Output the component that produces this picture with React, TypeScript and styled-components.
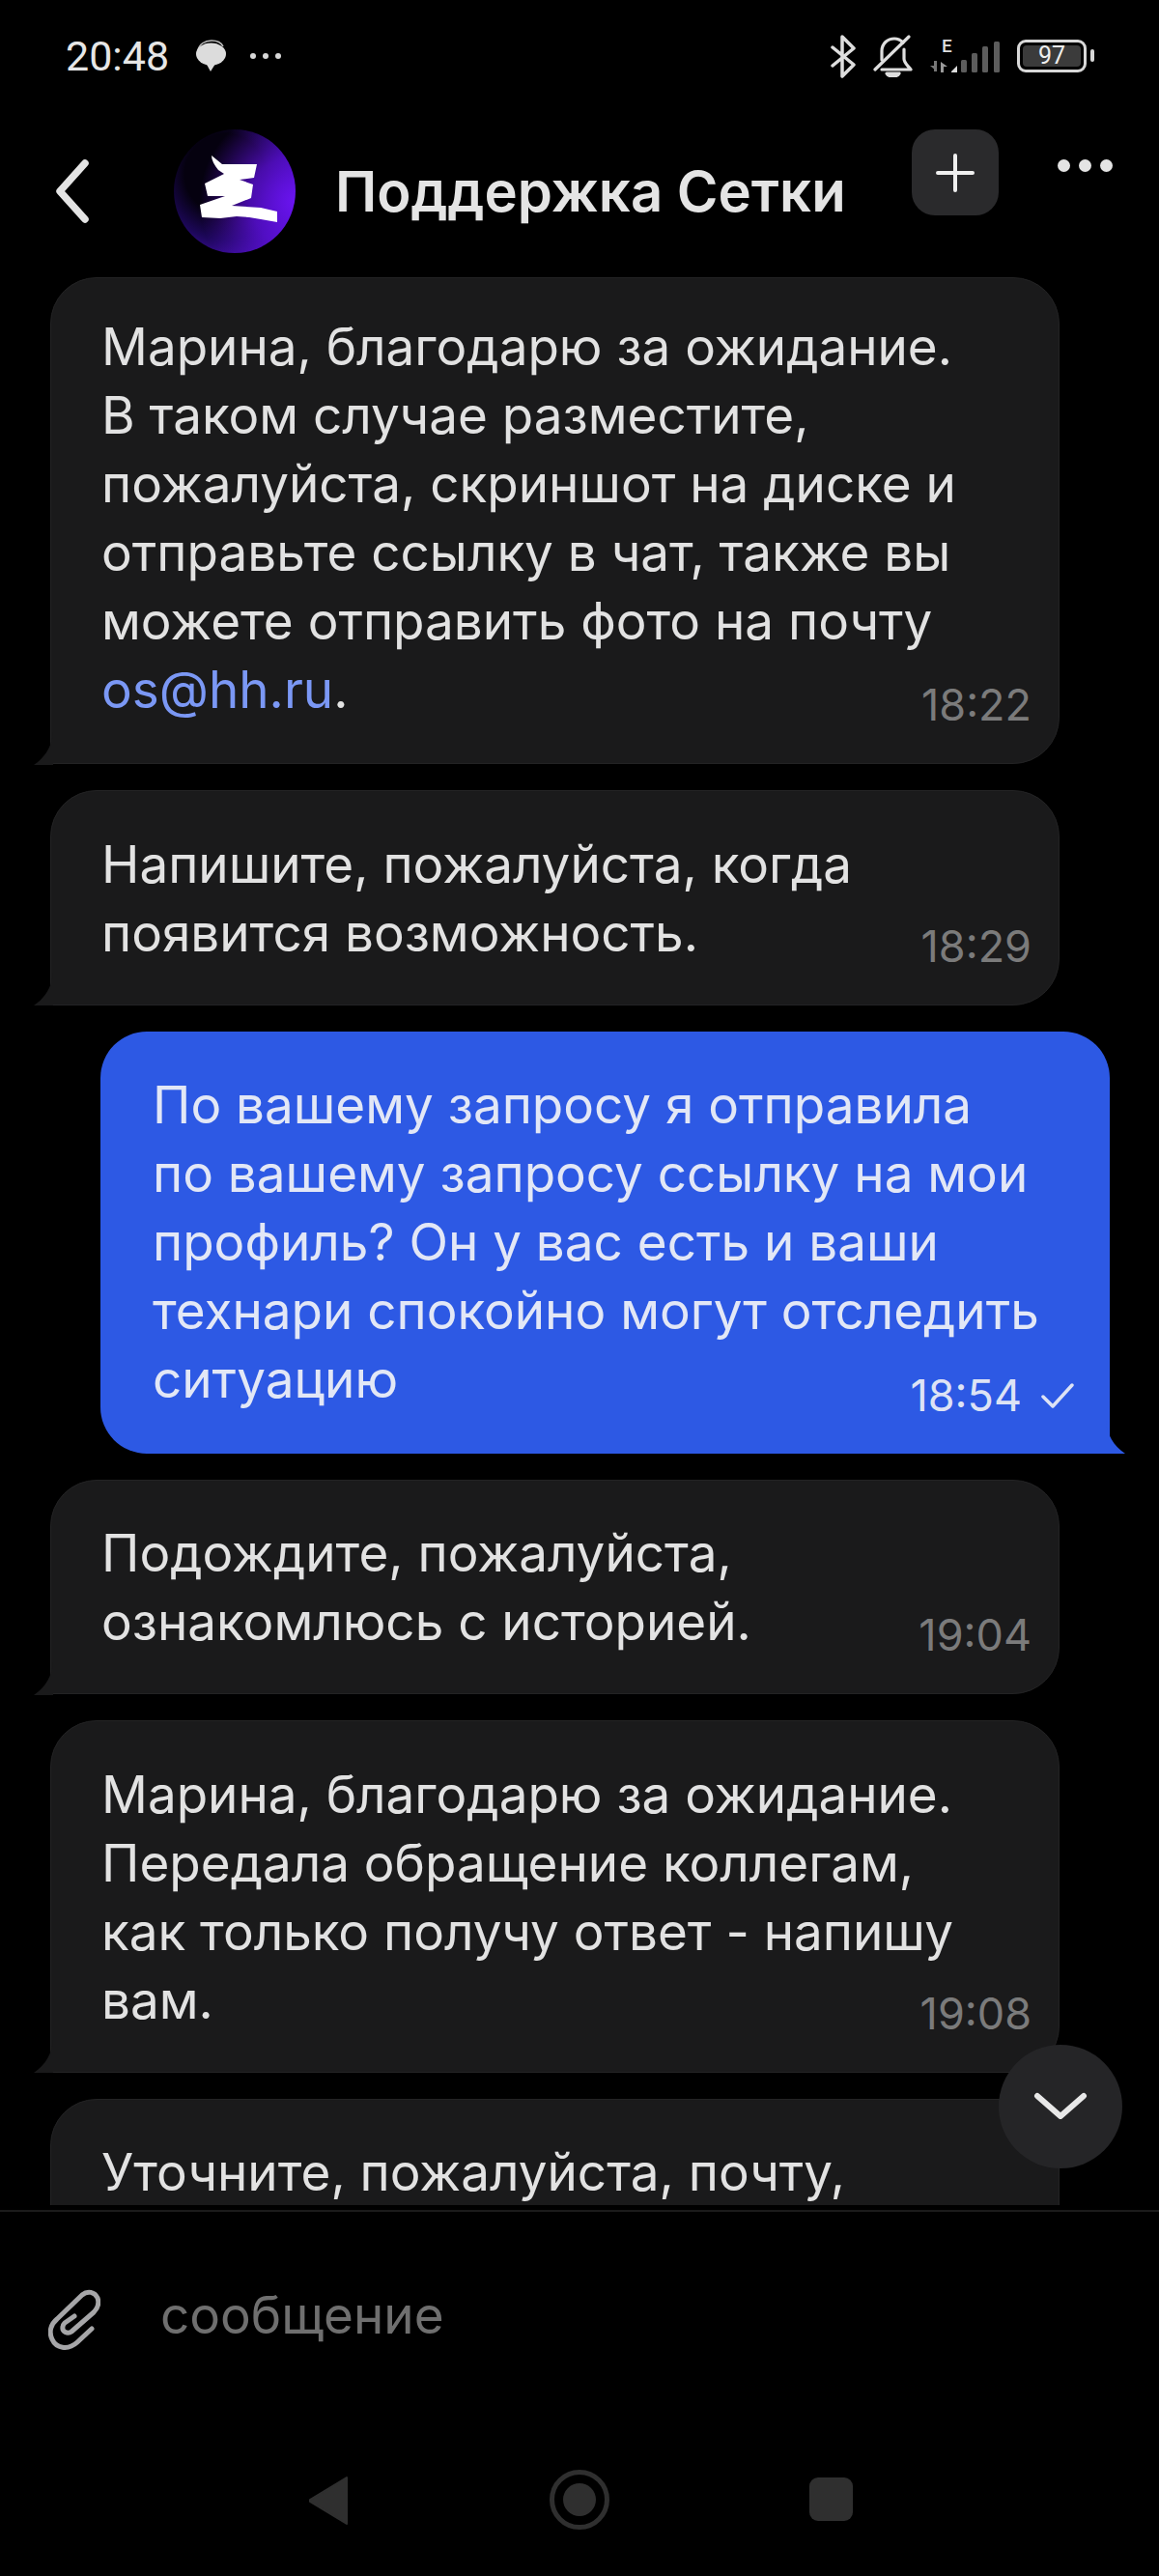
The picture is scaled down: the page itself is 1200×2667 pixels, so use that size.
import React from "react";
import styled, { createGlobalStyle } from "styled-components";

const Global = createGlobalStyle`
  html, body { margin: 0; padding: 0; background: #000; }
  * { box-sizing: border-box; }
`;

const Page = styled.div`
  position: relative;
  width: 1200px;
  height: 2667px;
  overflow: hidden;
  background: #000;
  display: flex;
  flex-direction: column;
  font-family: Inter, "Liberation Sans", sans-serif;
  color: #e3e3e3;
`;

const StatusBar = styled.div`
  height: 134px;
  padding: 30px 75px 0 68px;
  display: flex;
  justify-content: space-between;
  align-items: flex-start;
`;
const StatusLeft = styled.div`
  display: flex;
  align-items: center;
  height: 56px;
`;
const StatusTime = styled.span`
  font-family: Roboto, sans-serif;
  font-size: 43px;
  color: #e6e6e6;
  line-height: 56px;
  width: 134px;
`;
const StatusDots = styled.svg`
  margin-left: 23px;
`;
const StatusRight = styled.div`
  display: flex;
  align-items: center;
  height: 56px;
  gap: 18px;
`;
const Battery = styled.div`
  width: 72px;
  height: 34px;
  border: 3px solid #d8d8d8;
  border-radius: 9px;
  padding: 3px;
  display: flex;
  position: relative;
  &::after {
    content: "";
    position: absolute;
    right: -11px;
    top: 7px;
    width: 4px;
    height: 13px;
    border-radius: 2px;
    background: #d8d8d8;
  }
`;
const BatteryFill = styled.div`
  flex: 1;
  border-radius: 4px;
  background: #3b3b3b;
  color: #eee;
  font-family: Roboto, sans-serif;
  font-size: 25px;
  line-height: 22px;
  text-align: center;
`;

const Header = styled.div`
  height: 153px;
  padding-left: 57px;
  display: flex;
  align-items: flex-start;
`;
const Back = styled.div`
  width: 123px;
  height: 128px;
  display: flex;
  align-items: center;
`;
const Avatar = styled.div`
  width: 126px;
  height: 128px;
  border-radius: 50%;
  background:
    radial-gradient(circle at 100% 58%, #6a14f0 0%, rgba(96, 16, 225, 0.75) 32%, rgba(80, 16, 200, 0) 68%),
    radial-gradient(circle at 42% 36%, #05010f 38%, #1c0758 62%, #5a14d8 98%);
  flex: none;
`;
const Title = styled.div`
  margin-left: 41px;
  width: 597px;
  height: 128px;
  font-size: 58px;
  font-weight: 600;
  line-height: 128px;
  color: #e4e4e4;
  white-space: nowrap;
`;
const PlusButton = styled.div`
  width: 90px;
  height: 89px;
  border-radius: 24px;
  background: #2a2a2c;
  display: flex;
  align-items: center;
  justify-content: center;
`;
const MoreDots = styled.div`
  margin-left: 61px;
  margin-top: 31px;
  display: flex;
  gap: 9px;
`;
const Dot = styled.span`
  width: 13px;
  height: 13px;
  border-radius: 50%;
  background: #e4e4e4;
`;

const Messages = styled.div`
  height: 1996px;
  overflow: hidden;
  display: flex;
  flex-direction: column;
  gap: 27px;
  flex: none;
`;
const Bubble = styled.div<{ $own?: boolean; $cut?: boolean; $first?: boolean }>`
  position: relative;
  flex: none;
  width: 1045px;
  min-height: ${(p) => (p.$cut ? "220px" : "0")};
  margin-left: ${(p) => (p.$own ? "104px" : "52px")};
  padding: ${(p) => (p.$own ? "41px" : p.$first ? "36px" : "40.5px")} 30px ${(p) => (p.$own ? "41px" : p.$first ? "40px" : "38px")} ${(p) => (p.$own ? "54px" : "52px")};
  background: ${(p) => (p.$own ? "#2d59e4" : "#1a1a1b")};
  border: ${(p) => (p.$own ? "none" : "1.5px solid #232324")};
  border-radius: ${(p) => (p.$own ? "48px 48px 0 48px" : "48px 48px 48px 0")};
  font-size: 53px;
  line-height: 71px;
  color: ${(p) => (p.$own ? "#e2e7f6" : "#e2e2e2")};
`;
const Line = styled.div`
  white-space: nowrap;
`;
const Link = styled.span`
  color: #7b98f5;
`;
const Time = styled.div<{ $own?: boolean }>`
  position: absolute;
  bottom: 35px;
  right: ${(p) => (p.$own ? "37px" : "28px")};
  display: flex;
  align-items: center;
  gap: 20px;
  font-size: 45px;
  line-height: 50px;
  color: ${(p) => (p.$own ? "#dde3f5" : "#7b7b7b")};
`;
const Tail = styled.svg<{ $own?: boolean }>`
  position: absolute;
  bottom: ${(p) => (p.$own ? "0" : "-1.5px")};
  width: 20px;
  height: 34px;
  ${(p) => (p.$own ? "right: -16px;" : "left: -18px;")}
`;

const ScrollDown = styled.div`
  position: absolute;
  left: 1034px;
  top: 2117px;
  width: 128px;
  height: 128px;
  border-radius: 50%;
  background: #252527;
  display: flex;
  align-items: center;
  justify-content: center;
`;

const Composer = styled.div`
  margin-top: 5px;
  height: 232px;
  border-top: 2px solid #1b1b1b;
  padding: 74px 0 0 50px;
  display: flex;
  align-items: flex-start;
`;
const Placeholder = styled.div`
  margin-left: 62px;
  margin-top: 1px;
  font-size: 53px;
  line-height: 64px;
  color: #6f6f6f;
`;

const NavBar = styled.div`
  padding-top: 43px;
  padding-left: 319px;
  display: flex;
  align-items: flex-start;
`;
const NavHome = styled.div`
  margin-left: 207px;
  width: 62px;
  height: 62px;
  border-radius: 50%;
  border: 5px solid #2f2f2f;
  padding: 9px;
  margin-top: -6px;
`;
const NavHomeInner = styled.div`
  width: 100%;
  height: 100%;
  border-radius: 50%;
  background: #2f2f2f;
`;
const NavSquare = styled.div`
  margin-left: 207px;
  width: 45px;
  height: 45px;
  border-radius: 9px;
  background: #2f2f2f;
  margin-top: 2px;
`;

const Incoming: React.FC<{ time: string; first?: boolean; children: React.ReactNode }> = ({ time, first, children }) => (
  <Bubble $first={first}>
    {children}
    <Time>{time}</Time>
    <Tail viewBox="0 0 20 34">
      <path d="M20 0 C 19 14 12 26 0 34 L20 34 Z" fill="#1a1a1b" />
    </Tail>
  </Bubble>
);

export default function App() {
  return (
    <Page>
      <Global />
      <StatusBar>
        <StatusLeft>
          <StatusTime>20:48</StatusTime>
          <svg width="33" height="34" viewBox="0 0 33 34">
            <path d="M3 11 C4 5 10 1 17 1 C23 1 27 3 29 7" fill="none" stroke="#bdbdbd" strokeWidth="1.5" />
            <ellipse cx="16.5" cy="15" rx="15.5" ry="11.5" fill="#dcdcdc" />
            <path d="M11 24 L16 33 L21 25 Z" fill="#dcdcdc" />
          </svg>
          <StatusDots width="34" height="12" viewBox="0 0 34 12">
            <circle cx="4" cy="6" r="3" fill="#d8d8d8" />
            <circle cx="17" cy="6" r="3" fill="#d8d8d8" />
            <circle cx="30" cy="6" r="3" fill="#d8d8d8" />
          </StatusDots>
        </StatusLeft>
        <StatusRight>
          <svg width="26" height="45" viewBox="0 0 26 45" fill="none" stroke="#dedede" strokeWidth="3.5" strokeLinejoin="round" strokeLinecap="round">
            <path d="M2 13 L24 31 L12 43 L12 2 L24 14 L2 32" />
          </svg>
          <svg width="41" height="44" viewBox="0 0 41 44" fill="none" stroke="#dedede" strokeWidth="3.2" strokeLinecap="round" strokeLinejoin="round">
            <path d="M9 26 L9 17 C9 9 15 4 22 4 C26 4 29 6 31 8" />
            <path d="M32 15 L32 25 C32 29 36 32 39 36 L9 36" />
            <path d="M2 36 L37 2" />
            <path d="M14 40 C16 44 25 44 27 40 Z" fill="#dedede" />
          </svg>
          <svg width="72" height="37" viewBox="0 0 72 37">
            <text x="12" y="14" fill="#dedede" fontFamily="Roboto, sans-serif" fontWeight="500" fontSize="19">E</text>
            <path d="M0 28 L7 28 L7 34 Z M4 34 L4 23 L7 23 L7 34 Z" fill="#777" />
            <path d="M11 35 L11 24 L18 29 L14 29 L14 35 Z" fill="#9a9a9a" />
            <path d="M22 34 L28 28 L28 35 L22 35 Z" fill="#dcdcdc" />
            <rect x="32" y="22" width="6" height="13" rx="1.5" fill="#5c5c5c" />
            <rect x="43" y="15" width="6" height="20" rx="1.5" fill="#5c5c5c" />
            <rect x="54" y="8" width="6" height="27" rx="1.5" fill="#5c5c5c" />
            <rect x="66" y="3" width="6" height="32" rx="1.5" fill="#5c5c5c" />
          </svg>
          <Battery>
            <BatteryFill>97</BatteryFill>
          </Battery>
        </StatusRight>
      </StatusBar>

      <Header>
        <Back>
          <svg width="36" height="66" viewBox="0 0 36 66" fill="none" stroke="#e4e4e4" strokeWidth="7.5" strokeLinecap="round" strokeLinejoin="round">
            <path d="M31 4 L5 33 L31 62" />
          </svg>
        </Back>
        <Avatar>
          <svg width="126" height="128" viewBox="0 0 126 128">
            <path
              d="M39 27 L50 36 L86 36 L83 50 L68 52 L82 57 L80 71 L60 79 L90 81 L107 85 L107 96 L90 93 L78 91 L65 90 L48 92 L29 91 L27 78 L53 69 L35 69 L32 56 L52 46 L46 42 C42 37 39 32 39 27 Z"
              fill="#fff"
            />
          </svg>
        </Avatar>
        <Title>Поддержка Сетки</Title>
        <PlusButton>
          <svg width="40" height="40" viewBox="0 0 40 40" stroke="#f0f0f0" strokeWidth="4" strokeLinecap="round">
            <path d="M20 2 V38 M2 20 H38" />
          </svg>
        </PlusButton>
        <MoreDots>
          <Dot />
          <Dot />
          <Dot />
        </MoreDots>
      </Header>

      <Messages>
        <Incoming time="18:22" first>
          <Line>Марина, благодарю за ожидание.</Line>
          <Line>В таком случае разместите,</Line>
          <Line>пожалуйста, скриншот на диске и</Line>
          <Line>отправьте ссылку в чат, также вы</Line>
          <Line>можете отправить фото на почту</Line>
          <Line>
            <Link>os@hh.ru</Link>.
          </Line>
        </Incoming>
        <Incoming time="18:29">
          <Line>Напишите, пожалуйста, когда</Line>
          <Line>появится возможность.</Line>
        </Incoming>
        <Bubble $own>
          <Line>По вашему запросу я отправила</Line>
          <Line>по вашему запросу ссылку на мои</Line>
          <Line>профиль? Он у вас есть и ваши</Line>
          <Line>технари спокойно могут отследить</Line>
          <Line>ситуацию</Line>
          <Time $own>
            18:54
            <svg width="34" height="28" viewBox="0 0 34 28" fill="none" stroke="#dde3f5" strokeWidth="3.5" strokeLinecap="round" strokeLinejoin="round">
              <path d="M2 15 L12 25 L32 3" />
            </svg>
          </Time>
          <Tail $own viewBox="0 0 20 34">
            <path d="M0 0 C 1 14 8 26 20 34 L0 34 Z" fill="#2d59e4" />
          </Tail>
        </Bubble>
        <Incoming time="19:04">
          <Line>Подождите, пожалуйста,</Line>
          <Line>ознакомлюсь с историей.</Line>
        </Incoming>
        <Incoming time="19:08">
          <Line>Марина, благодарю за ожидание.</Line>
          <Line>Передала обращение коллегам,</Line>
          <Line>как только получу ответ - напишу</Line>
          <Line>вам.</Line>
        </Incoming>
        <Bubble $cut>
          <Line>Уточните, пожалуйста, почту,</Line>
        </Bubble>
      </Messages>

      <ScrollDown>
        <svg width="56" height="30" viewBox="0 0 56 30" fill="none" stroke="#e8e8e8" strokeWidth="6" strokeLinecap="round" strokeLinejoin="round">
          <path d="M4 4 L28 25 L52 4" />
        </svg>
      </ScrollDown>

      <Composer>
        <svg width="54" height="70" viewBox="0 0 54 70" fill="none" stroke="#a6a6a8" strokeWidth="5" strokeLinecap="round" strokeLinejoin="round">
          <path d="M45 47 L30 61 C20 70 8 67 4 58 C0 50 3 42 9 37 L35 12 C41 7 48 9 51 15 C53 21 51 26 47 30 L24 50 C20 53 14 50 15 45 C15 43 16 42 17 41 L27 34" />
        </svg>
        <Placeholder>сообщение</Placeholder>
      </Composer>

      <NavBar>
        <svg width="43" height="52" viewBox="0 0 43 52">
          <path d="M40 2 L40 50 L2 27 L2 25 Z" fill="#2f2f2f" stroke="#2f2f2f" strokeWidth="2" strokeLinejoin="round" />
        </svg>
        <NavHome>
          <NavHomeInner />
        </NavHome>
        <NavSquare />
      </NavBar>
    </Page>
  );
}
